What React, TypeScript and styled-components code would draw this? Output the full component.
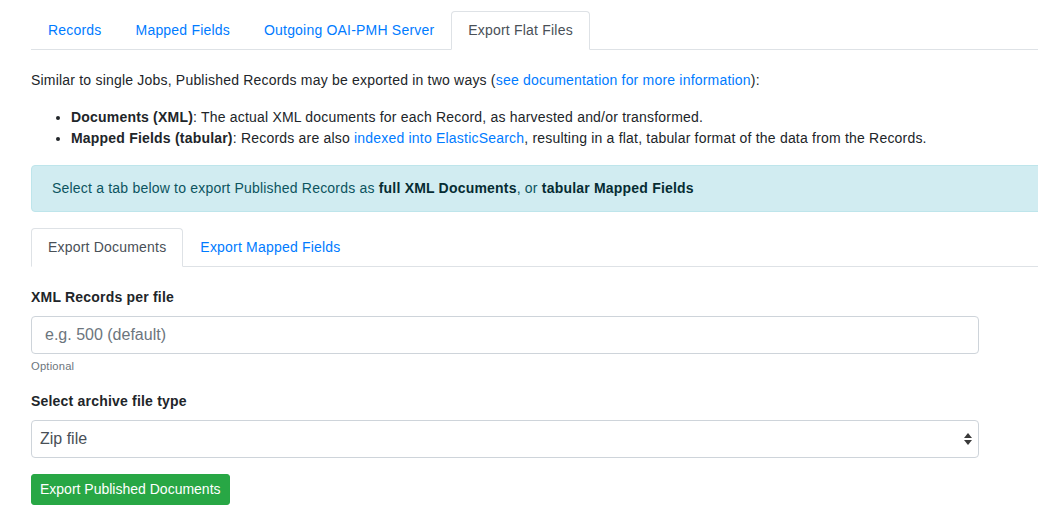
import React from "react";
import styled, { createGlobalStyle } from "styled-components";

const GlobalStyle = createGlobalStyle`
  html, body { margin: 0; padding: 0; background: #fff; }
  body {
    font-family: "Liberation Sans", Arial, Helvetica, sans-serif;
    font-size: 14px;
    line-height: 1.5;
    color: #212529;
    overflow: hidden;
  }
  * { box-sizing: border-box; }
`;

const Page = styled.div`
  padding: 11px 0 0 31px;
  width: 1060px;
  letter-spacing: 0.2px;
`;

const Tabs = styled.ul`
  display: flex;
  list-style: none;
  margin: 0;
  padding: 0;
  border-bottom: 1px solid #dee2e6;
`;

const TabItem = styled.li`
  margin-bottom: -1px;
`;

const TabLink = styled.a<{ $active?: boolean }>`
  display: block;
  padding: 8px 16px;
  font-size: 14px;
  line-height: 21px;
  text-decoration: none;
  border: 1px solid transparent;
  border-top-left-radius: 4px;
  border-top-right-radius: 4px;
  color: ${(p) => (p.$active ? "#495057" : "#007bff")};
  background: ${(p) => (p.$active ? "#fff" : "transparent")};
  border-color: ${(p) => (p.$active ? "#dee2e6 #dee2e6 #fff" : "transparent")};
  cursor: pointer;
`;

const Intro = styled.p`
  margin: 20px 0 16px;
`;

const Link = styled.a`
  color: #007bff;
  text-decoration: none;
`;

const List = styled.ul`
  margin: 0 0 16px;
  padding-left: 40px;
`;

const Alert = styled.div`
  padding: 12px 20px;
  margin-bottom: 16px;
  border: 1px solid #bee5eb;
  border-radius: 4px;
  background: #d1ecf1;
  color: #0c5460;
`;

const AlertStrong = styled.b`
  font-weight: 700;
  color: #062c33;
`;

const TabPane = styled.div`
  padding-top: 20px;
  width: 948px;
`;

const FormGroup = styled.div`
  margin-bottom: 16px;
`;

const Label = styled.label`
  display: block;
  font-weight: 700;
  margin-bottom: 8px;
  line-height: 21px;
`;

const Input = styled.input`
  display: block;
  width: 100%;
  height: 38px;
  padding: 6px 13px;
  font-family: inherit;
  font-size: 16px;
  line-height: 24px;
  color: #495057;
  background: #fff;
  border: 1px solid #ced4da;
  border-radius: 4px;
  outline: none;
  &::placeholder { color: #6c757d; opacity: 1; }
`;

const Help = styled.small`
  display: block;
  margin-top: 4px;
  font-size: 11.2px;
  line-height: 16.8px;
  color: #6c757d;
`;

const SelectWrap = styled.div`
  position: relative;
`;

const Select = styled.select`
  display: block;
  width: 100%;
  height: 38px;
  padding: 6px 30px 6px 8px;
  font-family: inherit;
  font-size: 16px;
  line-height: 24px;
  color: #495057;
  background: #fff;
  border: 1px solid #ced4da;
  border-radius: 4px;
  appearance: none;
  -webkit-appearance: none;
  outline: none;
`;

const Arrows = styled.svg`
  position: absolute;
  right: 6px;
  top: 12px;
  pointer-events: none;
`;

const Button = styled.button`
  display: inline-block;
  padding: 4px 8px;
  font-family: inherit;
  font-size: 14px;
  line-height: 21px;
  letter-spacing: 0;
  color: #fff;
  background: #28a745;
  border: 1px solid #28a745;
  border-radius: 3px;
  cursor: pointer;
`;

export default function App() {
  return (
    <>
      <GlobalStyle />
      <Page>
        <Tabs>
          <TabItem><TabLink>Records</TabLink></TabItem>
          <TabItem><TabLink>Mapped Fields</TabLink></TabItem>
          <TabItem><TabLink>Outgoing OAI-PMH Server</TabLink></TabItem>
          <TabItem><TabLink $active>Export Flat Files</TabLink></TabItem>
        </Tabs>
        <Intro>
          Similar to single Jobs, Published Records may be exported in two ways (
          <Link>see documentation for more information</Link>):
        </Intro>
        <List>
          <li>
            <b>Documents (XML)</b>: The actual XML documents for each Record, as harvested and/or transformed.
          </li>
          <li>
            <b>Mapped Fields (tabular)</b>: Records are also <Link>indexed into ElasticSearch</Link>, resulting in a flat, tabular format of the data from the Records.
          </li>
        </List>
        <Alert>
          Select a tab below to export Published Records as <AlertStrong>full XML Documents</AlertStrong>, or{" "}
          <AlertStrong>tabular Mapped Fields</AlertStrong>
        </Alert>
        <Tabs>
          <TabItem><TabLink $active>Export Documents</TabLink></TabItem>
          <TabItem><TabLink>Export Mapped Fields</TabLink></TabItem>
        </Tabs>
        <TabPane>
          <FormGroup>
            <Label>XML Records per file</Label>
            <Input placeholder="e.g. 500 (default)" />
            <Help>Optional</Help>
          </FormGroup>
          <FormGroup>
            <Label>Select archive file type</Label>
            <SelectWrap>
              <Select defaultValue="zip">
                <option value="zip">Zip file</option>
                <option value="targz">Tar file</option>
              </Select>
              <Arrows width="10" height="14" viewBox="0 0 10 14">
                <polygon points="5,1 9,6 1,6" fill="#3a3a3a" />
                <polygon points="1,8 9,8 5,13" fill="#3a3a3a" />
              </Arrows>
            </SelectWrap>
          </FormGroup>
          <Button>Export Published Documents</Button>
        </TabPane>
      </Page>
    </>
  );
}
